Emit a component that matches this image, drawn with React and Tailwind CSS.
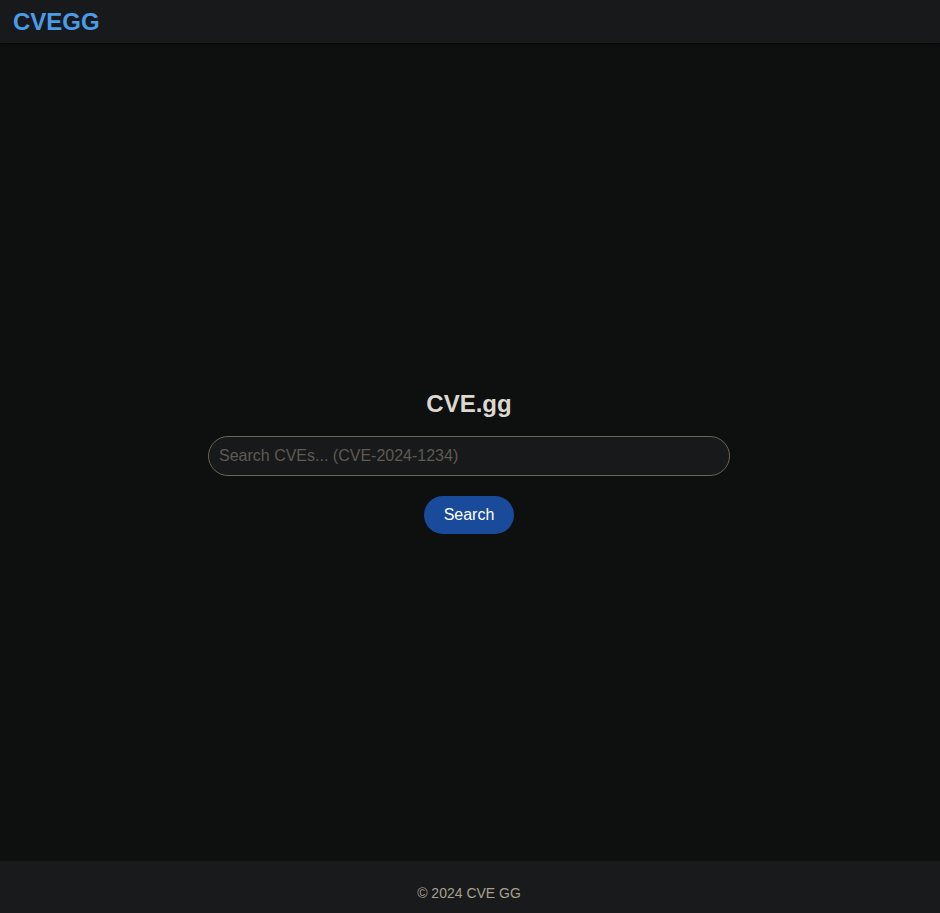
import React, { useState } from 'react';

const App = () => {
  const [query, setQuery] = useState('');

  return (
    <div
      className="min-h-screen flex flex-col bg-[#0e0f0f]"
      style={{ fontFamily: '"Liberation Sans", Arial, sans-serif' }}
    >
      <header className="h-[43px] flex items-center px-[13px] bg-[#18191b] shadow-[0_1px_2px_rgba(0,0,0,0.6)]">
        <span className="text-[24px] font-bold text-[#4a9be8] leading-none">CVEGG</span>
      </header>

      <main className="flex-1 flex flex-col items-center justify-center pt-[20px] pr-[2px]">
        <h1 className="text-[24px] font-bold text-[#dcd8d0] leading-[28px] mb-[18px]">CVE.gg</h1>
        <input
          type="text"
          value={query}
          onChange={(e) => setQuery(e.target.value)}
          placeholder="Search CVEs... (CVE-2024-1234)"
          className="w-[522px] h-[40px] px-[10px] rounded-full border border-[#6b6357] bg-[#18191b] text-[16px] text-[#dcd8d0] placeholder:text-[#5f5a52] focus:outline-none"
        />
        <button className="mt-[20px] w-[90px] h-[38px] rounded-full bg-[#1a4b9a] text-white text-[16px]">
          Search
        </button>
      </main>

      <footer className="h-[52px] flex items-center justify-center bg-[#181a1b] pr-[2px]">
        <p className="text-[14px] text-[#a9a090] pt-[12px]">© 2024 CVE GG</p>
      </footer>
    </div>
  );
};

export default App;
